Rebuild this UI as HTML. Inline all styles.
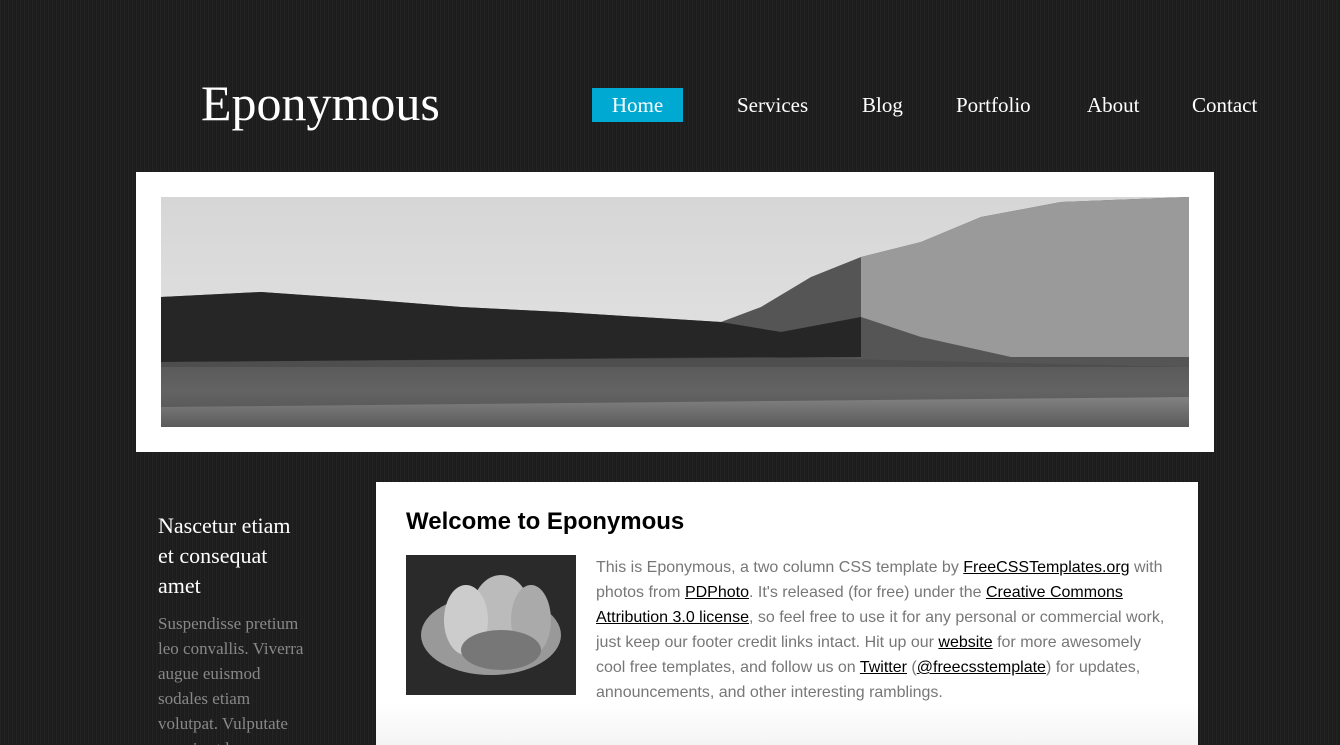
<!DOCTYPE html>
<html><head><meta charset="utf-8"><style>
*{margin:0;padding:0;box-sizing:border-box}
html{width:1340px;height:745px;overflow:hidden}
body{width:1340px;height:745px;overflow:hidden;background:#1e1e1e;background-image:repeating-linear-gradient(90deg,rgba(255,255,255,0.025) 0 1px,transparent 1px 3px,rgba(0,0,0,0.08) 3px 4px);position:relative;font-family:"Liberation Serif",serif}
.abs{position:absolute}
#logo{left:201px;top:73px;font-size:50px;color:#fff;line-height:60px}
.nav{top:88px;height:34px;line-height:34px;font-size:21px;color:#fff}
#home{left:592px;width:91px;background:#00a9d1;text-align:center}
#banner{left:136px;top:172px;width:1078px;height:280px;background:#fff}
#main{left:376px;top:482px;width:822px;height:263px;background:linear-gradient(#fff 0,#fff 220px,#f4f4f4 263px)}
h2{position:absolute;left:406px;top:508px;font:bold 24px "Liberation Sans",sans-serif;color:#000}
#txt{left:596px;top:555px;width:572px;font:16px/25px "Liberation Sans",sans-serif;color:#777}
#txt a{color:#000;text-decoration:underline}
#sh{left:158px;top:511px;width:145px;font-size:22px;line-height:30px;color:#fff}
#st{left:158px;top:611px;width:152px;height:134px;overflow:hidden;font-size:17px;line-height:25px;color:#888}
</style></head><body>
<div id="logo" class="abs">Eponymous</div>
<div id="home" class="abs nav">Home</div>
<div class="abs nav" style="left:737px">Services</div>
<div class="abs nav" style="left:862px">Blog</div>
<div class="abs nav" style="left:956px">Portfolio</div>
<div class="abs nav" style="left:1087px">About</div>
<div class="abs nav" style="left:1192px">Contact</div>
<div id="banner" class="abs">
<svg width="1028" height="230" style="position:absolute;left:25px;top:25px">
<defs><linearGradient id="sky" x1="0" y1="0" x2="0" y2="1"><stop offset="0" stop-color="#d6d6d6"/><stop offset="1" stop-color="#e6e6e6"/></linearGradient>
<linearGradient id="w" x1="0" y1="0" x2="0" y2="1"><stop offset="0" stop-color="#6a6a6a"/><stop offset=".5" stop-color="#8a8a8a"/><stop offset="1" stop-color="#5a5a5a"/></linearGradient></defs>
<rect width="1028" height="230" fill="url(#sky)"/>
<rect y="158" width="1028" height="72" fill="url(#w)"/>
<path d="M0 100 L40 98 L100 95 L200 102 L300 110 L400 115 L480 120 L560 125 L600 110 L650 80 L700 60 L760 45 L820 20 L900 5 L1028 0 L1028 170 L0 170Z" fill="#555"/>
<path d="M700 60 L760 45 L820 20 L900 5 L1028 0 L1028 160 L850 160 L760 140 L700 120Z" fill="#9a9a9a"/>
<path d="M0 100 L100 95 L200 102 L300 110 L400 115 L480 120 L560 125 L620 135 L700 120 L700 160 L0 165Z" fill="#262626"/>
<path d="M0 165 L600 160 L1028 170 L1028 200 L0 210Z" fill="#4a4a4a" opacity=".6"/>
</svg></div>
<div id="main" class="abs"></div>
<h2>Welcome to Eponymous</h2>
<svg class="abs" style="left:406px;top:555px" width="170" height="140"><rect width="170" height="140" fill="#2a2a2a"/>
<ellipse cx="85" cy="80" rx="70" ry="40" fill="#999"/><ellipse cx="95" cy="60" rx="30" ry="40" fill="#bbb"/><ellipse cx="60" cy="65" rx="22" ry="35" fill="#ccc"/><ellipse cx="125" cy="65" rx="20" ry="35" fill="#aaa"/><ellipse cx="95" cy="95" rx="40" ry="20" fill="#777"/></svg>
<div id="txt" class="abs">This is Eponymous, a two column CSS template by <a>FreeCSSTemplates.org</a> with photos from <a>PDPhoto</a>. It's released (for free) under the <a>Creative Commons Attribution 3.0 license</a>, so feel free to use it for any personal or commercial work, just keep our footer credit links intact. Hit up our <a>website</a> for more awesomely cool free templates, and follow us on <a>Twitter</a> (<a>@freecsstemplate</a>) for updates, announcements, and other interesting ramblings.</div>
<div id="sh" class="abs">Nascetur etiam et consequat amet</div>
<div id="st" class="abs">Suspendisse pretium leo convallis. Viverra augue euismod sodales etiam volutpat. Vulputate mauris et lorem ipsum</div>
</body></html>
